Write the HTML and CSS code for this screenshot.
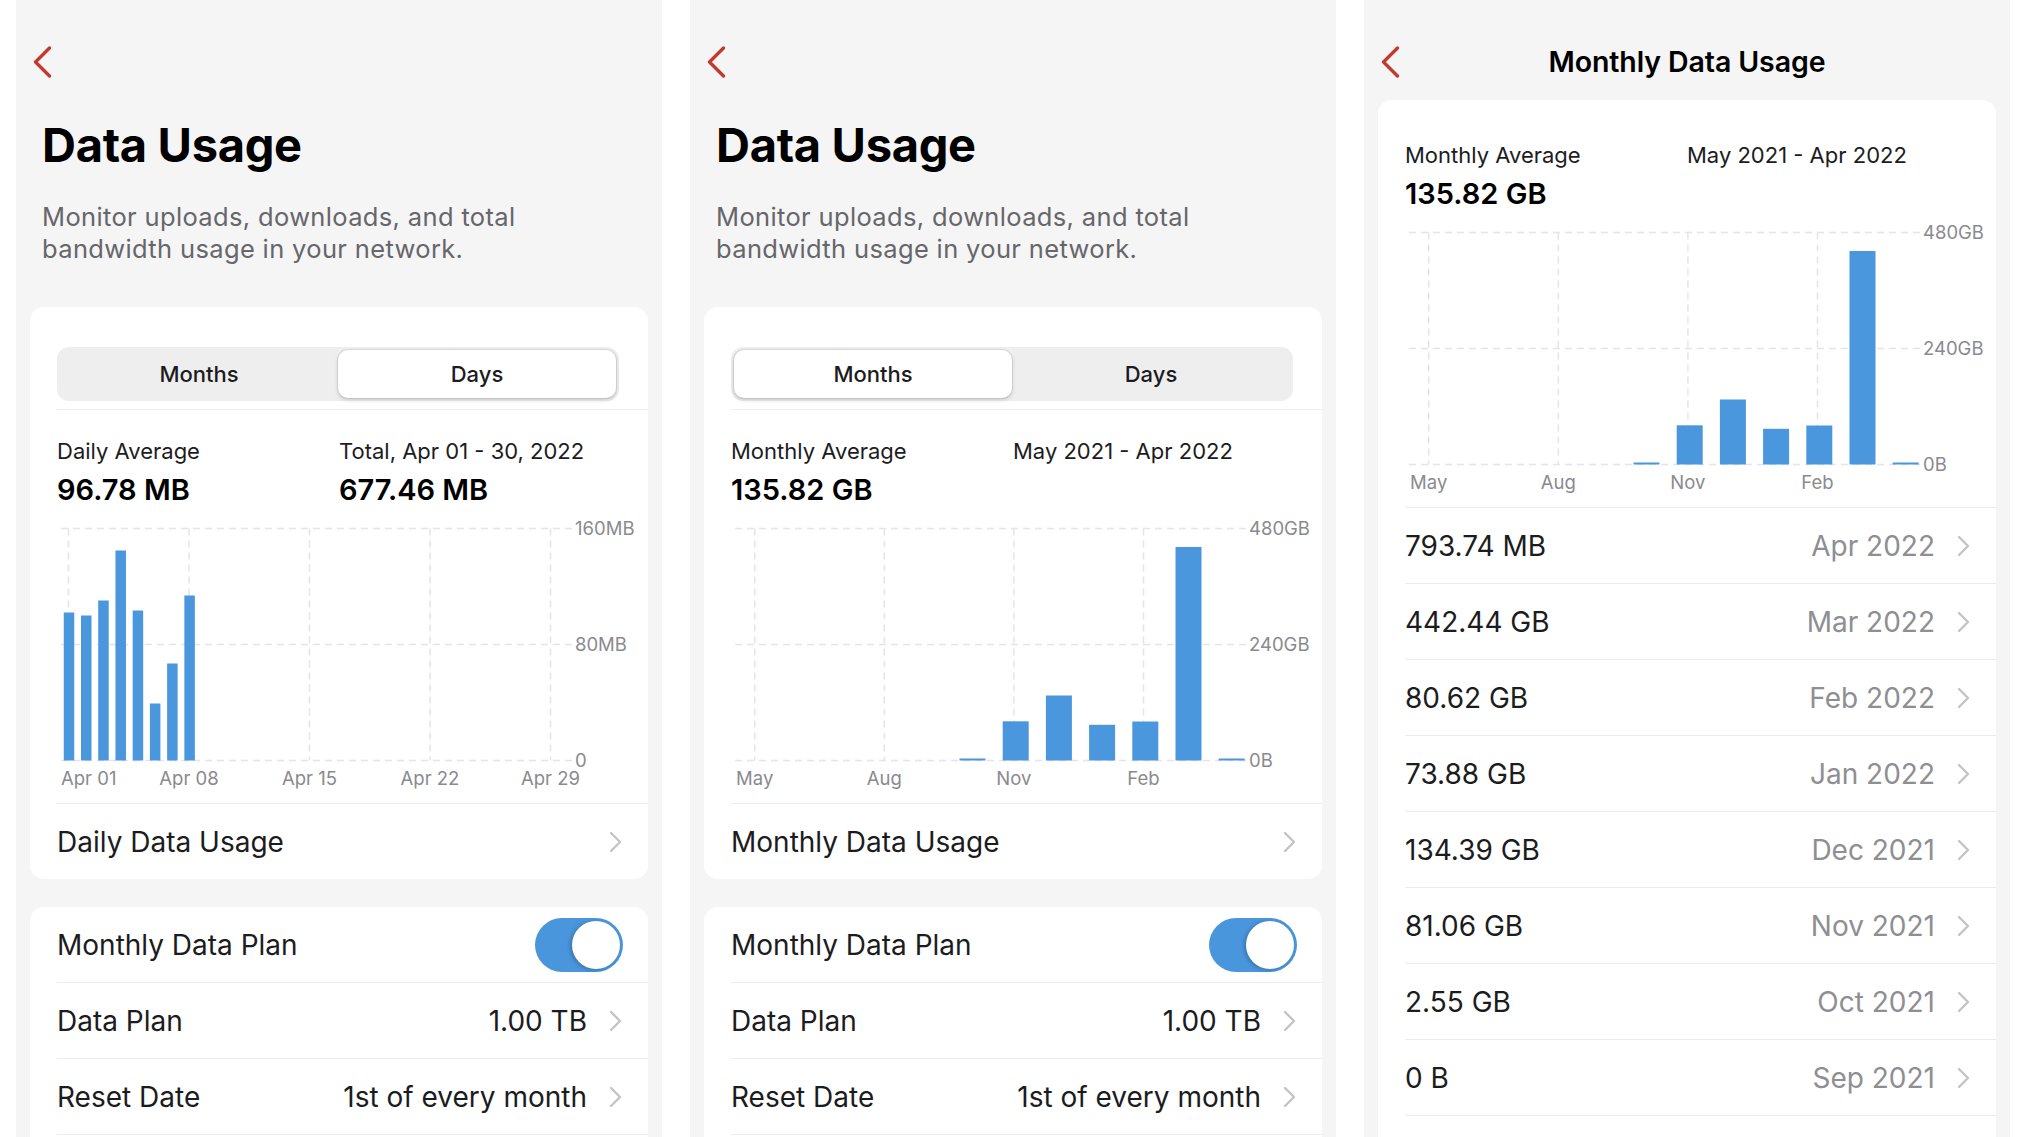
FILE: index.html
```html
<!DOCTYPE html>
<html lang="en">
<head>
<meta charset="utf-8">
<title>Data Usage</title>
<link rel="stylesheet" href="styles.css">
</head>
<body>
<div class="screens">

  <!-- Screen 1: Days -->
  <section class="panel">
    <header class="nav">
      <span class="back"><svg width="19" height="32" viewBox="0 0 19 32"><path d="M16.5 2 L2.5 16 L16.5 30" class="back-path"/></svg></span>
      <span class="nav-title"></span>
      <span></span>
    </header>
    <h1 class="title">Data Usage</h1>
    <p class="subtitle">Monitor uploads, downloads, and total<br>bandwidth usage in your network.</p>
    <div class="card">
      <div class="seg-wrap">
        <div class="seg"><span class="seg-item">Months</span><span class="seg-item active">Days</span></div>
      </div>
      <div class="stats">
        <div class="stat"><div class="stat-label">Daily Average</div><div class="stat-value">96.78 MB</div></div>
        <div class="stat"><div class="stat-label">Total, Apr 01 - 30, 2022</div><div class="stat-value">677.46 MB</div></div>
      </div>
      <svg class="chart" width="619" height="296" viewBox="0 0 619 296">
        <g class="grid">
          <line x1="31" y1="21.5" x2="543" y2="21.5"/>
          <line x1="31" y1="137.5" x2="543" y2="137.5"/>
          <line x1="31" y1="253.5" x2="543" y2="253.5"/>
          <line x1="38.5" y1="21.5" x2="38.5" y2="253.5"/>
          <line x1="159" y1="21.5" x2="159" y2="253.5"/>
          <line x1="279.5" y1="21.5" x2="279.5" y2="253.5"/>
          <line x1="400" y1="21.5" x2="400" y2="253.5"/>
          <line x1="520.5" y1="21.5" x2="520.5" y2="253.5"/>
        </g>
        <g class="bars">
          <rect x="33.75" y="105.5" width="10.5" height="148"/>
          <rect x="50.98" y="108.5" width="10.5" height="145"/>
          <rect x="68.21" y="93.5" width="10.5" height="160"/>
          <rect x="85.44" y="43.5" width="10.5" height="210"/>
          <rect x="102.67" y="103.5" width="10.5" height="150"/>
          <rect x="119.9" y="196.5" width="10.5" height="57"/>
          <rect x="137.13" y="156.5" width="10.5" height="97"/>
          <rect x="154.36" y="88.5" width="10.5" height="165"/>
        </g>
        <g class="axis">
          <text x="545" y="28.2">160MB</text>
          <text x="545" y="144.2">80MB</text>
          <text x="545" y="260.2">0</text>
          <text x="31" y="278">Apr 01</text>
          <text x="159" y="278" class="mid">Apr 08</text>
          <text x="279.5" y="278" class="mid">Apr 15</text>
          <text x="400" y="278" class="mid">Apr 22</text>
          <text x="520.5" y="278" class="mid">Apr 29</text>
        </g>
      </svg>
      <div class="row">
        <span class="row-label">Daily Data Usage</span>
        <span class="row-right"><svg class="chev" width="13" height="22" viewBox="0 0 13 22"><path d="M2 2 L11 11 L2 20"/></svg></span>
      </div>
    </div>
    <div class="card card-gap">
      <div class="row row-plain">
        <span class="row-label">Monthly Data Plan</span>
        <span class="toggle"><span class="knob"></span></span>
      </div>
      <div class="row">
        <span class="row-label">Data Plan</span>
        <span class="row-right"><span class="row-value">1.00 TB</span><svg class="chev" width="13" height="22" viewBox="0 0 13 22"><path d="M2 2 L11 11 L2 20"/></svg></span>
      </div>
      <div class="row">
        <span class="row-label">Reset Date</span>
        <span class="row-right"><span class="row-value">1st of every month</span><svg class="chev" width="13" height="22" viewBox="0 0 13 22"><path d="M2 2 L11 11 L2 20"/></svg></span>
      </div>
      <div class="card-tail"></div>
    </div>
  </section>

  <!-- Screen 2: Months -->
  <section class="panel">
    <header class="nav">
      <span class="back"><svg width="19" height="32" viewBox="0 0 19 32"><path d="M16.5 2 L2.5 16 L16.5 30" class="back-path"/></svg></span>
      <span class="nav-title"></span>
      <span></span>
    </header>
    <h1 class="title">Data Usage</h1>
    <p class="subtitle">Monitor uploads, downloads, and total<br>bandwidth usage in your network.</p>
    <div class="card">
      <div class="seg-wrap">
        <div class="seg"><span class="seg-item active">Months</span><span class="seg-item">Days</span></div>
      </div>
      <div class="stats">
        <div class="stat"><div class="stat-label">Monthly Average</div><div class="stat-value">135.82 GB</div></div>
        <div class="stat"><div class="stat-label">May 2021 - Apr 2022</div></div>
      </div>
      <svg class="chart" width="619" height="296" viewBox="0 0 619 296">
        <g class="grid">
          <line x1="31" y1="21.5" x2="543" y2="21.5"/>
          <line x1="31" y1="137.5" x2="543" y2="137.5"/>
          <line x1="31" y1="253.5" x2="543" y2="253.5"/>
          <line x1="50.7" y1="21.5" x2="50.7" y2="253.5"/>
          <line x1="180.3" y1="21.5" x2="180.3" y2="253.5"/>
          <line x1="309.9" y1="21.5" x2="309.9" y2="253.5"/>
          <line x1="439.5" y1="21.5" x2="439.5" y2="253.5"/>
        </g>
        <g class="bars">
          <rect x="255.5" y="251.5" width="26" height="2"/>
          <rect x="298.7" y="214.3" width="26" height="39.2"/>
          <rect x="341.9" y="188.5" width="26" height="65"/>
          <rect x="385.1" y="217.8" width="26" height="35.7"/>
          <rect x="428.3" y="214.5" width="26" height="39"/>
          <rect x="471.5" y="40" width="26" height="213.5"/>
          <rect x="514.7" y="251.5" width="26" height="2"/>
        </g>
        <g class="axis">
          <text x="545" y="28.2">480GB</text>
          <text x="545" y="144.2">240GB</text>
          <text x="545" y="260.2">0B</text>
          <text x="50.7" y="278" class="mid">May</text>
          <text x="180.3" y="278" class="mid">Aug</text>
          <text x="309.9" y="278" class="mid">Nov</text>
          <text x="439.5" y="278" class="mid">Feb</text>
        </g>
      </svg>
      <div class="row">
        <span class="row-label">Monthly Data Usage</span>
        <span class="row-right"><svg class="chev" width="13" height="22" viewBox="0 0 13 22"><path d="M2 2 L11 11 L2 20"/></svg></span>
      </div>
    </div>
    <div class="card card-gap">
      <div class="row row-plain">
        <span class="row-label">Monthly Data Plan</span>
        <span class="toggle"><span class="knob"></span></span>
      </div>
      <div class="row">
        <span class="row-label">Data Plan</span>
        <span class="row-right"><span class="row-value">1.00 TB</span><svg class="chev" width="13" height="22" viewBox="0 0 13 22"><path d="M2 2 L11 11 L2 20"/></svg></span>
      </div>
      <div class="row">
        <span class="row-label">Reset Date</span>
        <span class="row-right"><span class="row-value">1st of every month</span><svg class="chev" width="13" height="22" viewBox="0 0 13 22"><path d="M2 2 L11 11 L2 20"/></svg></span>
      </div>
      <div class="card-tail"></div>
    </div>
  </section>

  <!-- Screen 3: Monthly Data Usage -->
  <section class="panel">
    <header class="nav">
      <span class="back"><svg width="19" height="32" viewBox="0 0 19 32"><path d="M16.5 2 L2.5 16 L16.5 30" class="back-path"/></svg></span>
      <span class="nav-title">Monthly Data Usage</span>
      <span></span>
    </header>
    <div class="card">
      <div class="stats stats-top">
        <div class="stat"><div class="stat-label">Monthly Average</div><div class="stat-value">135.82 GB</div></div>
        <div class="stat"><div class="stat-label">May 2021 - Apr 2022</div></div>
      </div>
      <svg class="chart" width="619" height="296" viewBox="0 0 619 296">
        <g class="grid">
          <line x1="31" y1="21.5" x2="543" y2="21.5"/>
          <line x1="31" y1="137.5" x2="543" y2="137.5"/>
          <line x1="31" y1="253.5" x2="543" y2="253.5"/>
          <line x1="50.7" y1="21.5" x2="50.7" y2="253.5"/>
          <line x1="180.3" y1="21.5" x2="180.3" y2="253.5"/>
          <line x1="309.9" y1="21.5" x2="309.9" y2="253.5"/>
          <line x1="439.5" y1="21.5" x2="439.5" y2="253.5"/>
        </g>
        <g class="bars">
          <rect x="255.5" y="251.5" width="26" height="2"/>
          <rect x="298.7" y="214.3" width="26" height="39.2"/>
          <rect x="341.9" y="188.5" width="26" height="65"/>
          <rect x="385.1" y="217.8" width="26" height="35.7"/>
          <rect x="428.3" y="214.5" width="26" height="39"/>
          <rect x="471.5" y="40" width="26" height="213.5"/>
          <rect x="514.7" y="251.5" width="26" height="2"/>
        </g>
        <g class="axis">
          <text x="545" y="28.2">480GB</text>
          <text x="545" y="144.2">240GB</text>
          <text x="545" y="260.2">0B</text>
          <text x="50.7" y="278" class="mid">May</text>
          <text x="180.3" y="278" class="mid">Aug</text>
          <text x="309.9" y="278" class="mid">Nov</text>
          <text x="439.5" y="278" class="mid">Feb</text>
        </g>
      </svg>
      <div class="row"><span class="row-label">793.74 MB</span><span class="row-right"><span class="row-month">Apr 2022</span><svg class="chev" width="13" height="22" viewBox="0 0 13 22"><path d="M2 2 L11 11 L2 20"/></svg></span></div>
      <div class="row"><span class="row-label">442.44 GB</span><span class="row-right"><span class="row-month">Mar 2022</span><svg class="chev" width="13" height="22" viewBox="0 0 13 22"><path d="M2 2 L11 11 L2 20"/></svg></span></div>
      <div class="row"><span class="row-label">80.62 GB</span><span class="row-right"><span class="row-month">Feb 2022</span><svg class="chev" width="13" height="22" viewBox="0 0 13 22"><path d="M2 2 L11 11 L2 20"/></svg></span></div>
      <div class="row"><span class="row-label">73.88 GB</span><span class="row-right"><span class="row-month">Jan 2022</span><svg class="chev" width="13" height="22" viewBox="0 0 13 22"><path d="M2 2 L11 11 L2 20"/></svg></span></div>
      <div class="row"><span class="row-label">134.39 GB</span><span class="row-right"><span class="row-month">Dec 2021</span><svg class="chev" width="13" height="22" viewBox="0 0 13 22"><path d="M2 2 L11 11 L2 20"/></svg></span></div>
      <div class="row"><span class="row-label">81.06 GB</span><span class="row-right"><span class="row-month">Nov 2021</span><svg class="chev" width="13" height="22" viewBox="0 0 13 22"><path d="M2 2 L11 11 L2 20"/></svg></span></div>
      <div class="row"><span class="row-label">2.55 GB</span><span class="row-right"><span class="row-month">Oct 2021</span><svg class="chev" width="13" height="22" viewBox="0 0 13 22"><path d="M2 2 L11 11 L2 20"/></svg></span></div>
      <div class="row"><span class="row-label">0 B</span><span class="row-right"><span class="row-month">Sep 2021</span><svg class="chev" width="13" height="22" viewBox="0 0 13 22"><path d="M2 2 L11 11 L2 20"/></svg></span></div>
      <div class="card-tail"></div>
    </div>
  </section>

</div>
</body>
</html>
```
FILE: styles.css
```css
html, body {
  margin: 0;
  padding: 0;
  height: 100%;
  overflow: hidden;
  background: #ffffff;
}

body {
  font-family: Inter, "Noto Sans", "Liberation Sans", sans-serif;
  color: #1c1c1e;
  -webkit-font-smoothing: antialiased;
}

.screens {
  display: flex;
  gap: 28px;
  padding: 0 16px;
  height: 1137px;
  overflow: hidden;
}

.panel {
  flex: 0 0 646px;
  width: 646px;
  height: 1137px;
  background: #f5f5f5;
  overflow: hidden;
}

/* nav bar */
.nav {
  display: grid;
  grid-template-columns: 1fr auto 1fr;
  align-items: center;
  height: 76px;
  margin-top: 24px;
}

.back {
  display: flex;
  align-items: center;
  padding-left: 17px;
}

.back svg {
  display: block;
}

.back-path {
  fill: none;
  stroke: #c23a2d;
  stroke-width: 3.3;
  stroke-linecap: round;
  stroke-linejoin: round;
}

.nav-title {
  font-size: 28.5px;
  line-height: 34px;
  font-weight: 600;
  color: #000;
  letter-spacing: -0.1px;
}

/* heading */
.title {
  margin: 17px 0 0;
  padding-left: 26px;
  font-size: 47px;
  line-height: 56px;
  font-weight: 700;
  color: #000;
  letter-spacing: -0.3px;
}

.subtitle {
  margin: 28px 0 0;
  padding-left: 26px;
  font-size: 25.5px;
  line-height: 32px;
  letter-spacing: 0.35px;
  color: #66666b;
}

/* cards */
.card {
  margin: 42px 14px 0;
  background: #ffffff;
  border-radius: 14px;
  overflow: hidden;
}

.panel > .nav + .card {
  margin-top: 0;
}

.card-gap {
  margin-top: 28px;
}

/* segmented control */
.seg-wrap {
  margin-left: 27px;
  padding: 40px 29px 8px 0;
  border-bottom: 1px solid #eeeef2;
}

.seg {
  display: grid;
  grid-template-columns: 1fr 1fr;
  height: 54px;
  padding: 3px;
  box-sizing: border-box;
  background: #eeeeef;
  border-radius: 12px;
}

.seg-item {
  display: flex;
  align-items: center;
  justify-content: center;
  font-size: 22px;
  font-weight: 500;
  color: #1c1c1e;
  border-radius: 10px;
}

.seg-item.active {
  background: #ffffff;
  box-shadow: 0 0 0 1px rgba(0, 0, 0, 0.07), 0 2px 4px rgba(0, 0, 0, 0.16);
}

/* stats */
.stats {
  display: grid;
  grid-template-columns: 282px 1fr;
  padding: 27px 0 0 27px;
}

.stats-top {
  padding-top: 41px;
}

.stat-label {
  font-size: 22px;
  line-height: 28px;
  color: #1c1c1e;
}

.stat-value {
  margin-top: 8px;
  font-size: 29px;
  line-height: 34px;
  font-weight: 600;
  color: #000;
}

/* chart */
.chart {
  display: block;
}

.grid line {
  stroke: #e4e4eb;
  stroke-width: 1.5;
  stroke-dasharray: 7 5;
}

.bars rect {
  fill: #4a97dd;
}

.axis text {
  font-family: Inter, "Noto Sans", "Liberation Sans", sans-serif;
  font-size: 18.5px;
  fill: #8a8a8e;
}

.axis text.mid {
  text-anchor: middle;
}

/* rows */
.row {
  display: flex;
  align-items: center;
  justify-content: space-between;
  height: 75px;
  margin-left: 27px;
  padding-right: 26px;
  border-top: 1px solid #ebebf0;
}

.row-plain {
  border-top: none;
}

.row-label {
  font-size: 28px;
  color: #1c1c1e;
}

.row-right {
  display: flex;
  align-items: center;
  gap: 22px;
}

.row-value {
  font-size: 28px;
  color: #1c1c1e;
}

.row-month {
  font-size: 28px;
  color: #8e8e93;
}

.chev {
  display: block;
}

.chev path {
  fill: none;
  stroke: #c4c4c8;
  stroke-width: 2.4;
  stroke-linecap: round;
  stroke-linejoin: round;
}

.card-tail {
  margin-left: 27px;
  height: 60px;
  border-top: 1px solid #ebebf0;
}

/* toggle */
.toggle {
  display: flex;
  justify-content: flex-end;
  align-items: center;
  width: 88px;
  height: 54px;
  padding: 3px;
  box-sizing: border-box;
  margin-right: -1px;
  border-radius: 27px;
  background: #4a96dc;
}

.knob {
  width: 48px;
  height: 48px;
  border-radius: 50%;
  background: #ffffff;
  box-shadow: -2px 1px 4px rgba(0, 0, 0, 0.22);
}
```
